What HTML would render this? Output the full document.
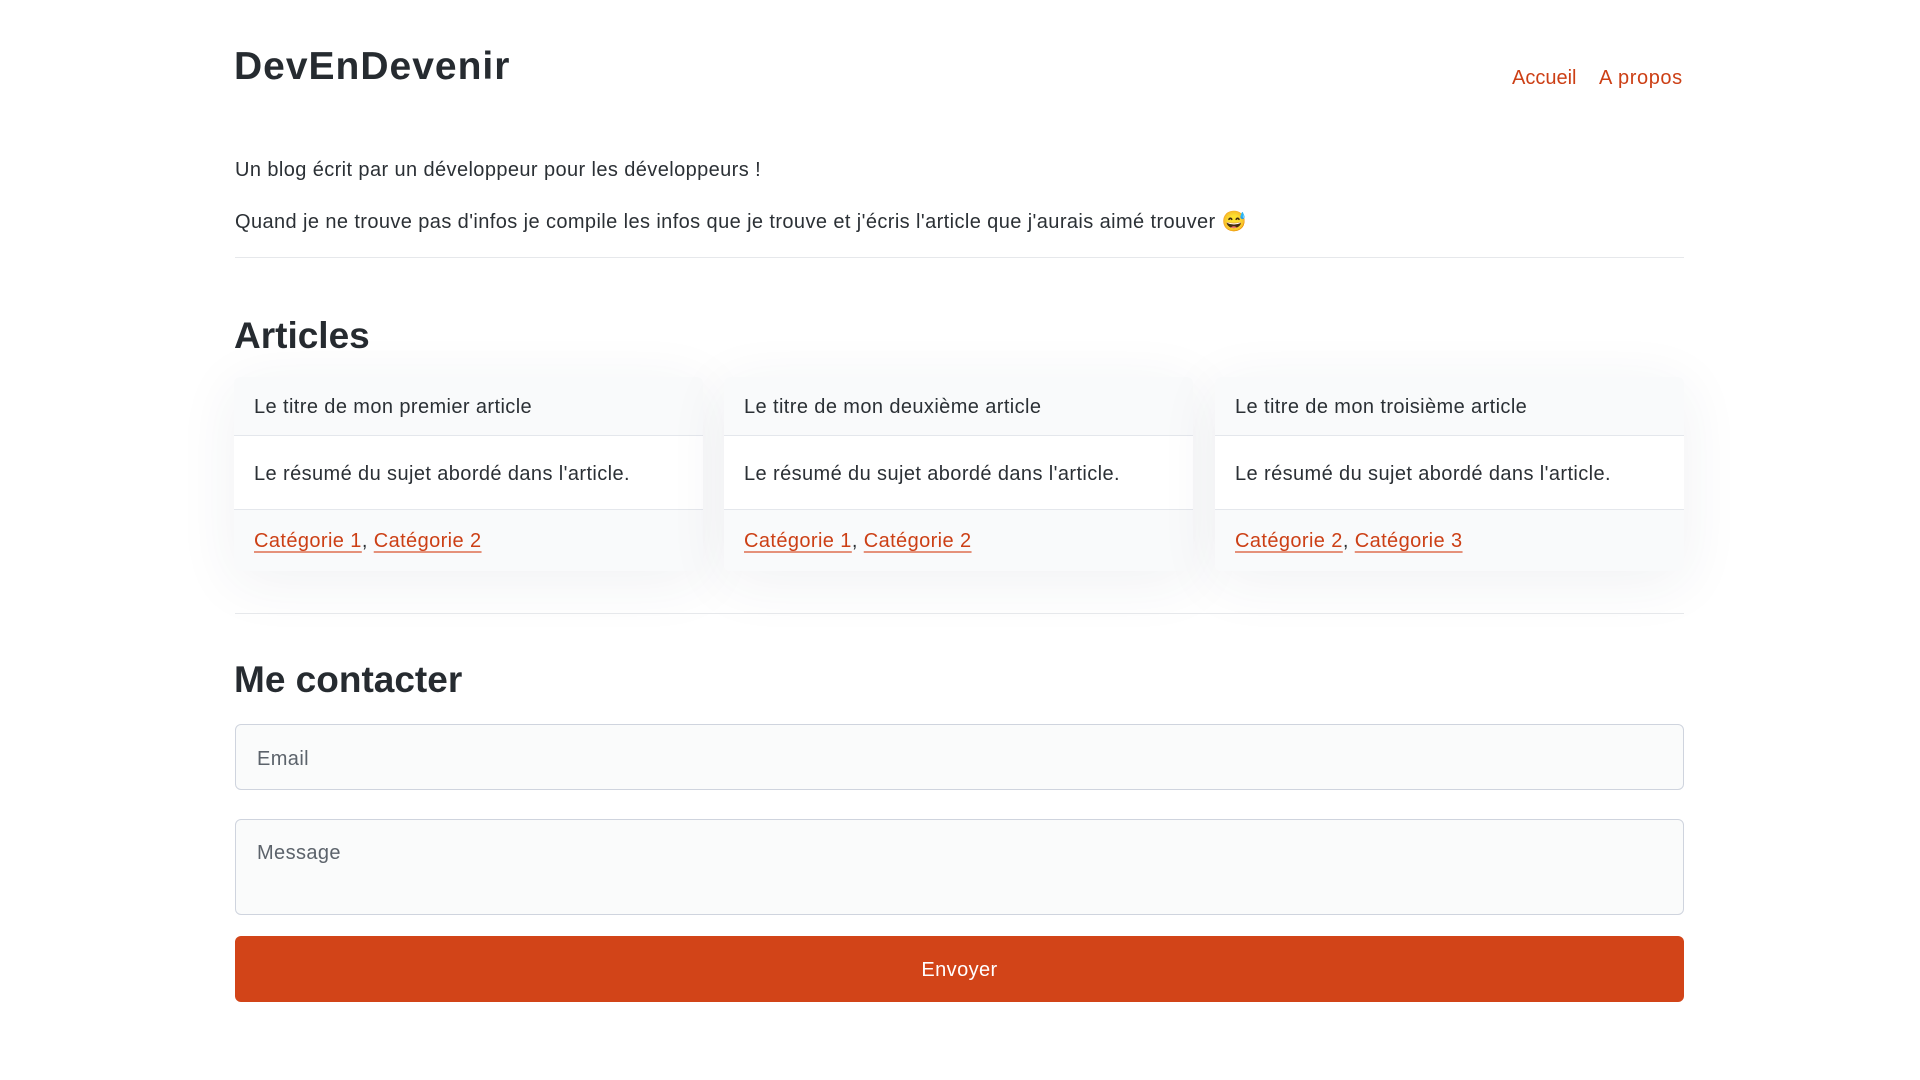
<!DOCTYPE html>
<html><head><meta charset="utf-8"><style>
*{box-sizing:border-box;margin:0;padding:0}
body{width:1920px;height:1080px;background:#fff;font-family:"Liberation Sans",sans-serif;color:#2b3035;position:relative;overflow:hidden}
.a{position:absolute}
a{color:#cc3f15}
.t{font-size:20px;line-height:24px}
.ls{letter-spacing:0.4px}
h1,h2{font-weight:bold;color:#262b30}
.card{position:absolute;top:377px;width:469px;height:194px;border-radius:6px;background:#fff;box-shadow:0 10px 60px rgba(40,50,90,0.07);overflow:hidden;letter-spacing:0.4px}
.card .h{height:59px;background:#f9fafb;border-bottom:1px solid #e4e7ec;padding:19px 20px 0;font-size:20px}
.card .b{height:74px;border-bottom:1px solid #e4e7ec;padding:27px 20px 0;font-size:20px}
.card .f{height:61px;background:#f9fafb;padding:20px 20px 0;font-size:20px}
.card a{text-decoration:underline;text-decoration-color:#e5917a;text-underline-offset:4px}
.hr{position:absolute;left:235px;width:1449px;height:1px;background:#e6e8eb}
.in{position:absolute;left:235px;width:1449px;border:1px solid #cfd4de;border-radius:6px;background:#fafbfb;color:#5c636b;font-size:20px;padding-left:21px;letter-spacing:0.4px}
</style></head><body>
<h1 class="a" style="left:234px;top:43px;font-size:39px;line-height:48px;letter-spacing:1px">DevEnDevenir</h1>
<div class="a t" style="left:1512px;top:66px"><a style="text-decoration:none">Accueil</a></div>
<div class="a t" style="left:1599px;top:66px;letter-spacing:0.6px"><a style="text-decoration:none">A propos</a></div>
<div class="a t ls" style="left:235px;top:158px">Un blog écrit par un développeur pour les développeurs !</div>
<div class="a t ls" style="left:235px;top:210px">Quand je ne trouve pas d'infos je compile les infos que je trouve et j'écris l'article que j'aurais aimé trouver 😅</div>
<div class="hr" style="top:257px"></div>
<h2 class="a" style="left:234px;top:314px;font-size:37px;line-height:44px">Articles</h2>
<div class="card" style="left:234px"><div class="h">Le titre de mon premier article</div><div class="b">Le résumé du sujet abordé dans l'article.</div><div class="f"><a>Catégorie 1</a>, <a>Catégorie 2</a></div></div>
<div class="card" style="left:724px"><div class="h">Le titre de mon deuxième article</div><div class="b">Le résumé du sujet abordé dans l'article.</div><div class="f"><a>Catégorie 1</a>, <a>Catégorie 2</a></div></div>
<div class="card" style="left:1215px"><div class="h">Le titre de mon troisième article</div><div class="b">Le résumé du sujet abordé dans l'article.</div><div class="f"><a>Catégorie 2</a>, <a>Catégorie 3</a></div></div>
<div class="hr" style="top:613px"></div>
<h2 class="a" style="left:234px;top:658px;font-size:37px;line-height:44px">Me contacter</h2>
<div class="in" style="top:724px;height:66px;padding-top:23px">Email</div>
<div class="in" style="top:819px;height:96px;padding-top:22px">Message</div>
<div class="a" style="left:235px;top:936px;width:1449px;height:66px;background:#d24418;border-radius:6px;color:#fff;font-size:20px;text-align:center;line-height:68px;letter-spacing:0.4px">Envoyer</div>
</body></html>
